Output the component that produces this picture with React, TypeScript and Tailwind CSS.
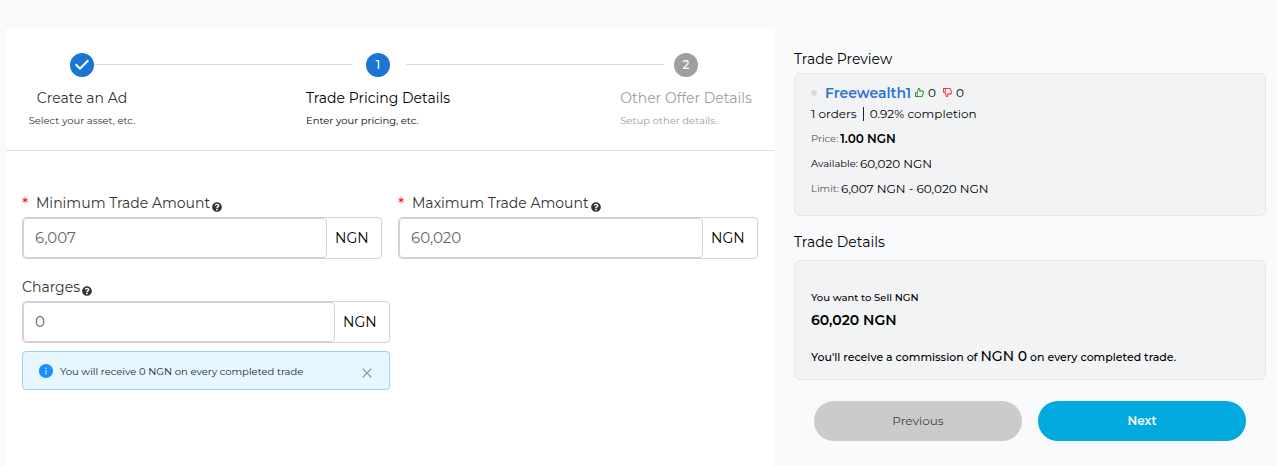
import type { ReactNode } from "react";
import { AiFillInfoCircle, AiOutlineClose, AiOutlineDislike, AiOutlineLike } from "react-icons/ai";
import { FaQuestionCircle } from "react-icons/fa";

type StepProps = {
  title: string;
  note: string;
  state: "done" | "active" | "upcoming";
  number?: string;
};

function Step({ title, note, state, number }: StepProps) {
  const tone =
    state === "done"
      ? "text-[#333333] text-center"
      : state === "active"
        ? "text-black"
        : "text-[#9e9e9e]";
  return (
    <li className="flex w-6 shrink-0 flex-col items-center">
      <svg
        viewBox="0 0 24 24"
        className={state === "upcoming" ? "size-6 text-[#9e9e9e]" : "size-6 text-[#1976d2]"}
        fill="currentColor"
        aria-hidden="true"
      >
        {state === "done" ? (
          <path d="M12 0a12 12 0 1 0 0 24 12 12 0 0 0 0-24zm-2 17l-5-5 1.4-1.4 3.6 3.6 7.6-7.6L19 8l-9 9z" />
        ) : (
          <>
            <circle cx="12" cy="12" r="12" />
            <text x="12" y="16" textAnchor="middle" fill="#ffffff" fontSize="12" fontWeight="500">
              {number}
            </text>
          </>
        )}
      </svg>
      <div className={`mt-[9px] w-max ${tone}`}>
        <p className="text-sm leading-6">{title}</p>
        <p className="text-[10px] leading-[22px]">{note}</p>
      </div>
    </li>
  );
}

type FieldProps = { id: string; label: string; value: string; required?: boolean };

function AmountField({ id, label, value, required }: FieldProps) {
  return (
    <div>
      <div className="flex h-6 items-center text-sm text-[#333333]">
        {required && <span className="w-3.5 pt-1 text-base leading-4 text-[#ff0000]">*</span>}
        <label htmlFor={id}>{label}</label>
        <FaQuestionCircle className="mt-2 ml-0.5 size-2.5" aria-hidden="true" />
      </div>
      <div className="mt-0.5 flex h-[42px] rounded-sm border border-[#d1d1d8]">
        <input
          id={id}
          defaultValue={value}
          className="min-w-0 flex-1 rounded-sm border border-[#d1d1d8] bg-white px-[11px] text-[15px] text-[#666666] outline-none"
        />
        <span className="flex w-[54px] items-center pl-2 text-sm text-black">NGN</span>
      </div>
    </div>
  );
}

function Card({ children }: { children: ReactNode }) {
  return (
    <div className="rounded-md border border-[#e5e6e9] bg-[#f2f3f5] px-4 text-black">{children}</div>
  );
}

function PreviewRow({ label, children }: { label: ReactNode; children: ReactNode }) {
  return (
    <p className="flex h-[25px] items-center gap-0.5">
      {label}
      {children}
    </p>
  );
}

export default function App() {
  return (
    <div className="flex min-h-screen flex-col bg-[#f9f9f9] pt-[29px] pl-1.5 font-['Montserrat','Inter',sans-serif]">
      <div className="grid flex-1 grid-cols-[768fr_503fr]">
        <main className="bg-white">
          <ol className="flex h-[122px] border-b border-[#dcdcdc] pt-6 pr-[76px] pl-16">
            <Step title="Create an Ad" note="Select your asset, etc." state="done" />
            <li aria-hidden="true" className="mt-[11px] mr-3.5 h-px flex-1 bg-[#dcdcdc]" />
            <Step title="Trade Pricing Details" note="Enter your pricing, etc." state="active" number="1" />
            <li aria-hidden="true" className="mt-[11px] mr-2.5 ml-4 h-px flex-1 bg-[#dcdcdc]" />
            <Step title="Other Offer Details" note="Setup other details." state="upcoming" number="2" />
          </ol>

          <form className="px-4 pt-10">
            <div className="grid grid-cols-2 gap-4">
              <AmountField id="min" label="Minimum Trade Amount" value="6,007" required />
              <AmountField id="max" label="Maximum Trade Amount" value="60,020" required />
            </div>
            <div className="mt-4 w-1/2">
              <AmountField id="charges" label="Charges" value="0" />
              <div
                role="status"
                className="mt-2 flex h-[39px] items-center rounded-sm border border-[#91d5ff] bg-[#e6f7ff] pr-[15px] pl-[15px] pt-px text-[10px] text-[#262626]"
              >
                <AiFillInfoCircle className="mr-1.5 size-4 text-[#1890ff]" aria-hidden="true" />
                <span className="flex-1">You will receive 0 NGN on every completed trade</span>
                <button type="button" aria-label="Close" className="mt-1 text-[#8c8c8c]">
                  <AiOutlineClose className="size-3.5" />
                </button>
              </div>
            </div>
          </form>
        </main>

        <aside className="bg-[#f9fafc] pt-[18px] pr-[11px] pl-5">
          <h2 className="mb-0.5 text-sm leading-6 text-black">Trade Preview</h2>
          <Card>
            <div className="h-[141px] pt-2 text-xs">
              <div className="flex h-[21px] items-center">
                <span className="mr-2 size-1.5 rounded-full bg-[#d9d9d9]" />
                <a href="#profile" className="mr-[3px] text-sm font-semibold text-[#2f73cf]">
                  Freewealth1
                </a>
                <AiOutlineLike className="mr-[3px] size-[11px] text-[#008000]" aria-hidden="true" />
                <span className="mr-1.5">0</span>
                <AiOutlineDislike className="mr-[3px] size-[11px] text-[#ff0000]" aria-hidden="true" />
                <span>0</span>
              </div>
              <p className="mb-0.5 flex h-[21px] items-center">
                1 orders
                <span className="mx-1.5 h-3.5 w-px bg-[#35104a]" />
                0.92% completion
              </p>
              <PreviewRow label={<span className="text-[10px] text-[#555555]">Price:</span>}>
                <span className="font-semibold">1.00 NGN</span>
              </PreviewRow>
              <PreviewRow label={<span className="text-[10px]">Available:</span>}>
                <span>60,020 NGN</span>
              </PreviewRow>
              <PreviewRow label={<span className="text-[10px] text-[#555555]">Limit:</span>}>
                <span>6,007 NGN - 60,020 NGN</span>
              </PreviewRow>
            </div>
          </Card>

          <h2 className="mt-3.5 mb-1.5 text-sm leading-6 text-black">Trade Details</h2>
          <Card>
            <div className="h-[118px] pt-[27px] font-medium">
              <p className="text-[10px] leading-5">You want to Sell NGN</p>
              <p className="text-sm leading-6 font-semibold">60,020 NGN</p>
              <p className="mt-[13px] text-[11px] leading-6">
                You'll receive a commission of <span className="text-sm">NGN 0</span> on every completed trade.
              </p>
            </div>
          </Card>

          <div className="mt-[21px] grid grid-cols-2 gap-4 px-5">
            <button type="button" className="h-10 rounded-full bg-[#cbcbcb] text-xs text-[#444444]">
              Previous
            </button>
            <button type="button" className="h-10 rounded-full bg-[#02a9de] text-xs font-semibold text-white">
              Next
            </button>
          </div>
        </aside>
      </div>
    </div>
  );
}
